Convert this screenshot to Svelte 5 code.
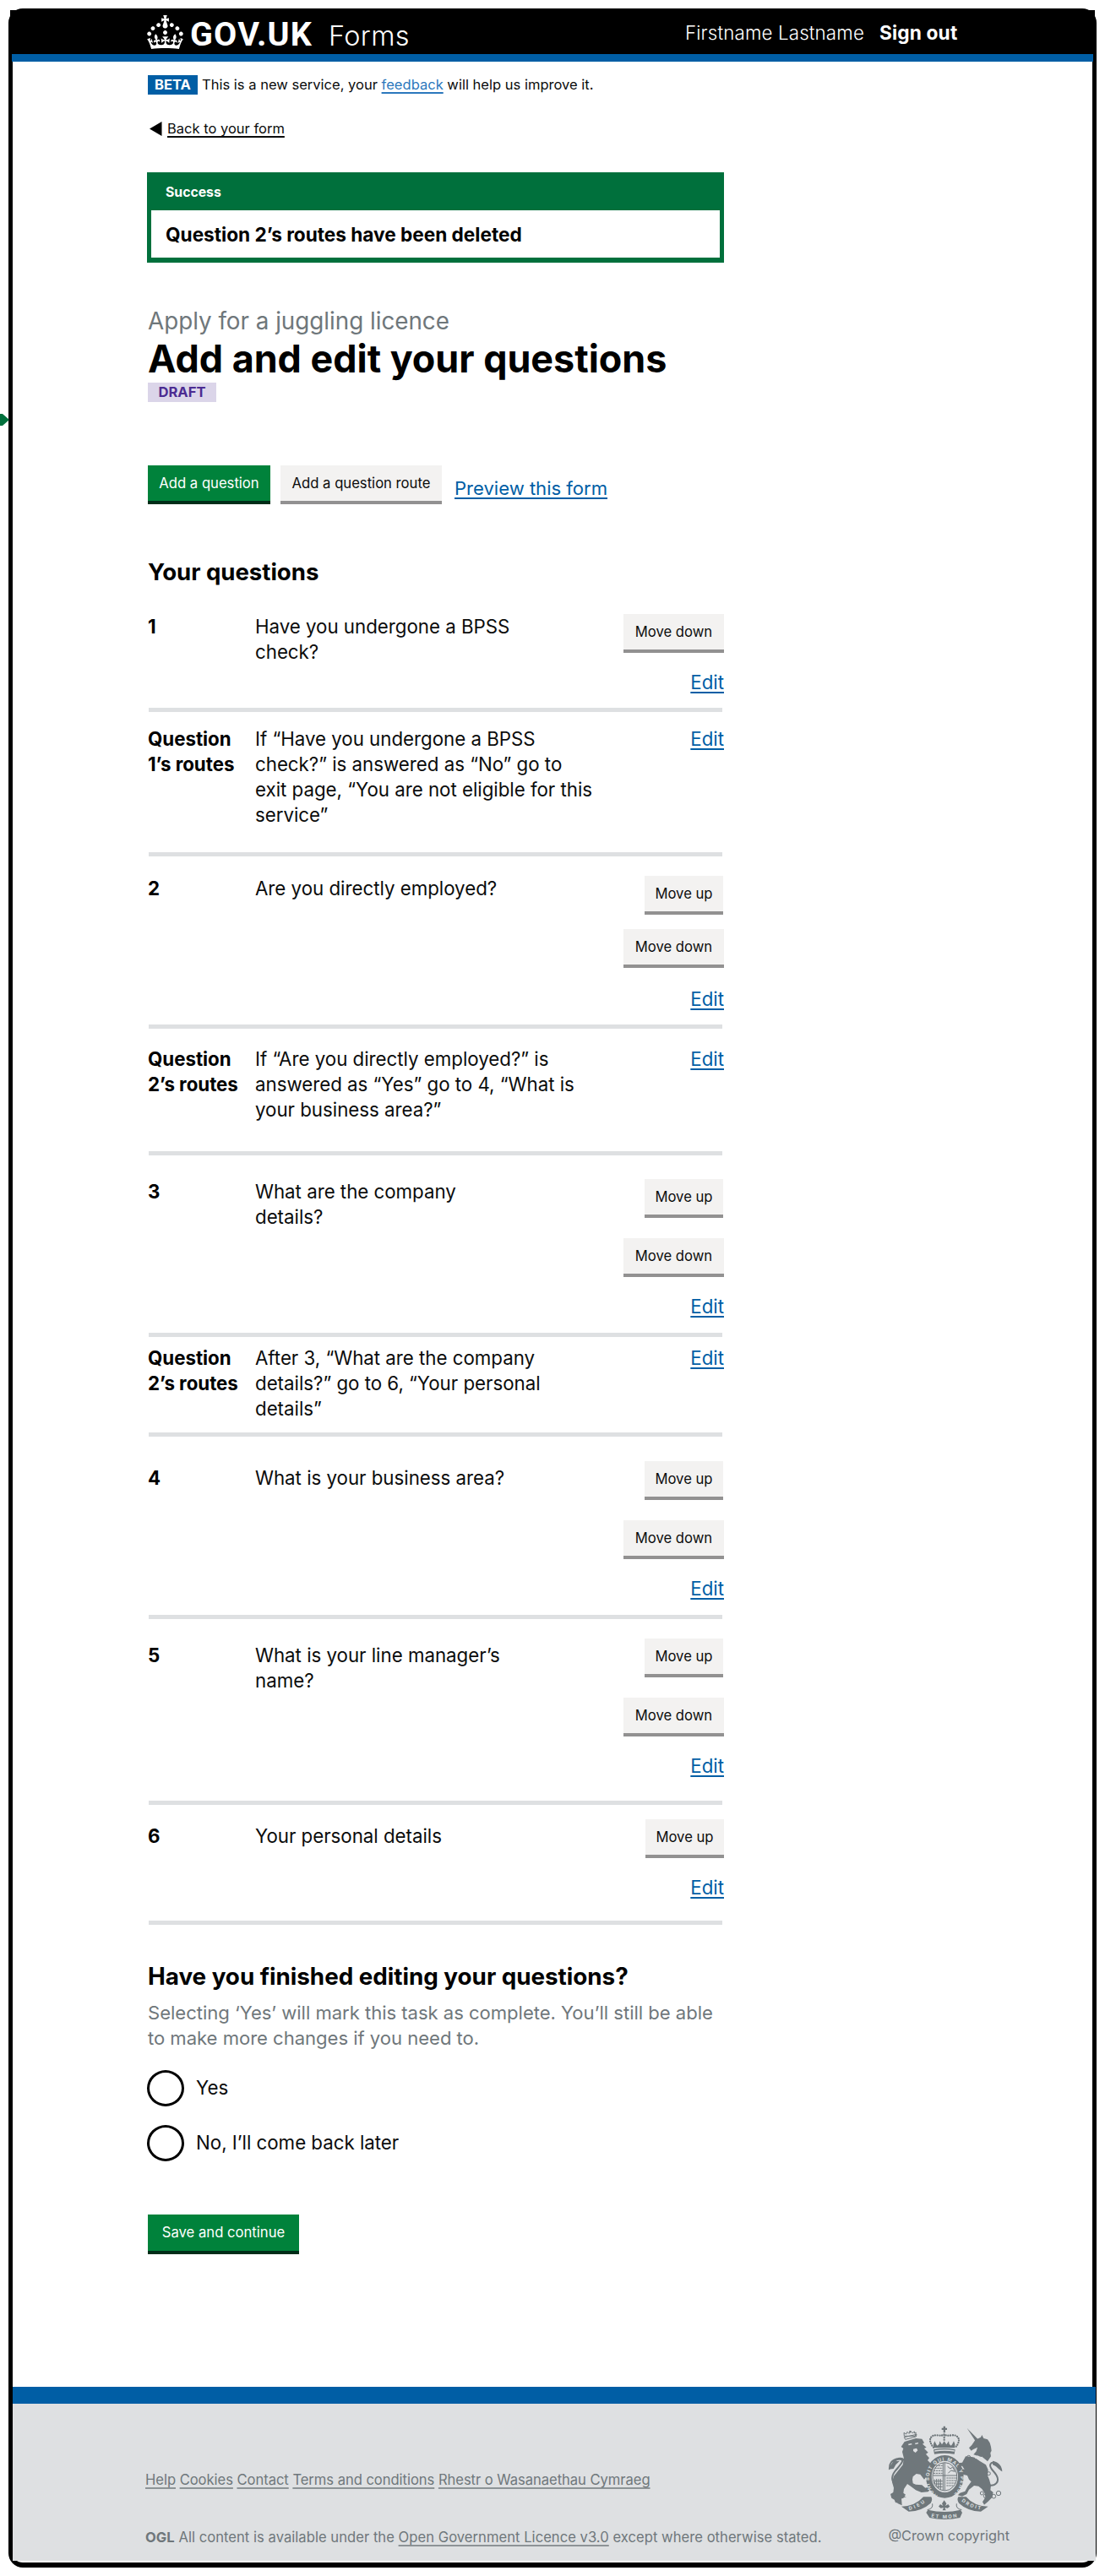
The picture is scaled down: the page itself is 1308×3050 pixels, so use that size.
<script>
  const rows = [
    { name: 'q1', key: '1', text: 'Have you undergone a BPSS\ncheck?', moves: ['Move down'] },
    { name: 'r1', key: 'Question\n1’s routes', text: 'If “Have you undergone a BPSS\ncheck?” is answered as “No” go to\nexit page, “You are not eligible for this\nservice”', moves: [] },
    { name: 'q2', key: '2', text: 'Are you directly employed?', moves: ['Move up', 'Move down'] },
    { name: 'r2', key: 'Question\n2’s routes', text: 'If “Are you directly employed?” is\nanswered as “Yes” go to 4, “What is\nyour business area?”', moves: [] },
    { name: 'q3', key: '3', text: 'What are the company\ndetails?', moves: ['Move up', 'Move down'] },
    { name: 'r3', key: 'Question\n2’s routes', text: 'After 3, “What are the company\ndetails?” go to 6, “Your personal\ndetails”', moves: [] },
    { name: 'q4', key: '4', text: 'What is your business area?', moves: ['Move up', 'Move down'] },
    { name: 'q5', key: '5', text: 'What is your line manager’s\nname?', moves: ['Move up', 'Move down'] },
    { name: 'q6', key: '6', text: 'Your personal details', moves: ['Move up'] }
  ];
  const footerLinks = ['Help', 'Cookies', 'Contact', 'Terms and conditions', 'Rhestr o Wasanaethau Cymraeg'];
  const options = ['Yes', 'No, I’ll come back later'];
</script>

<div class="frame">
  <svg class="flow-arrow" viewBox="0 0 11 14" aria-hidden="true"><path d="M0 0l3 0 8 7-8 7H0z" /></svg>

  <header class="header">
    <svg class="crown" viewBox="0 0 32 30" aria-hidden="true">
      <path fill-rule="evenodd" d="M22.6 10.4c-1 .4-2-.1-2.4-1-.4-.9.1-2 1-2.4.9-.4 2 .1 2.4 1s-.1 2-1 2.4m-5.9 6.7c-.9.4-2-.1-2.4-1-.4-.9.1-2 1-2.4.9-.4 2 .1 2.4 1s-.1 2-1 2.4m10.8-3.7c-1 .4-2-.1-2.4-1-.4-.9.1-2 1-2.4.9-.4 2 .1 2.4 1s0 2-1 2.4m3.3 4.8c-1 .4-2-.1-2.4-1-.4-.9.1-2 1-2.4.9-.4 2 .1 2.4 1s-.1 2-1 2.4M17 4.7l2.3 1.2V2.5l-2.3.7-.2-.2.9-3h-3.4l.9 3-.2.2c-.1.1-2.3-.7-2.3-.7v3.4L15 4.7c.1.1.1.2.2.2l-1.3 4c-.1.2-.1.4-.1.6 0 1.1.8 2 1.9 2.2h.7c1-.2 1.9-1.1 1.9-2.1 0-.2 0-.4-.1-.6l-1.3-4c-.1-.2 0-.2.1-.3m-7.6 5.7c.9.4 2-.1 2.4-1 .4-.9-.1-2-1-2.4-.9-.4-2 .1-2.4 1s0 2 1 2.4m-5 3c.9.4 2-.1 2.4-1 .4-.9-.1-2-1-2.4-.9-.4-2 .1-2.4 1s.1 2 1 2.4m-3.2 4.8c.9.4 2-.1 2.4-1 .4-.9-.1-2-1-2.4-.9-.4-2 .1-2.4 1s0 2 1 2.4m14.8 11c4.4 0 8.6.3 12.3.8 1.1-4.5 2.4-7 3.7-8.8l-2.5-.9c.2 1.3.3 1.9 0 2.7-.4-.4-.8-1.1-1.1-2.3l-1.2 4c.7-.5 1.3-.8 2-.9-1.1 2.5-2.6 3.1-3.5 3-1.1-.2-1.7-1.2-1.5-2.1.3-1.2 1.5-1.5 2.1-.1 1.1-2.3-.8-3-2-2.3 1.9-1.9 2.1-3.5.6-5.6-2.1 1.6-2.1 3.2-1.2 5.5-1.2-1.4-3.2-.6-2.5 1.6.9-1.4 2.1-.5 1.9.8-.2 1.1-1.7 2.1-3.5 1.9-2.7-.2-2.9-2.1-2.9-3.6.7-.1 1.9.5 2.9 1.9l.4-4.3c-1.1 1.1-2.1 1.4-3.2 1.4.4-1.2 2.1-3 2.1-3h-5.4s1.7 1.9 2.1 3c-1.1 0-2.1-.2-3.2-1.4l.4 4.3c1-1.4 2.2-2 2.9-1.9-.1 1.5-.2 3.4-2.9 3.6-1.9.2-3.4-.8-3.5-1.9-.2-1.3 1-2.2 1.9-.8.7-2.3-1.2-3-2.5-1.6.9-2.2.9-3.9-1.2-5.5-1.5 2-1.3 3.7.6 5.6-1.2-.7-3.1 0-2 2.3.6-1.4 1.8-1.1 2.1.1.2.9-.3 1.9-1.5 2.1-.9.2-2.4-.5-3.5-3 .6 0 1.2.3 2 .9l-1.2-4c-.3 1.1-.7 1.9-1.1 2.3-.3-.8-.2-1.4 0-2.7l-2.9.9C1.3 23 2.6 25.5 3.7 30c3.7-.5 7.9-.8 12.3-.8" />
    </svg>
    <span class="logotype">GOV.UK</span>
    <span class="product">Forms</span>
    <nav class="account">
      <span>Firstname Lastname</span>
      <b>Sign out</b>
    </nav>
  </header>
  <div class="header-bar"></div>

  <main class="main">
    <div class="phase">
      <strong class="phase-tag">BETA</strong>
      <span>This is a new service, your <a href="#feedback">feedback</a> will help us improve it.</span>
    </div>

    <div class="back">
      <svg viewBox="0 0 15 17" aria-hidden="true"><path d="M0 8.5L14.5 0v17z" /></svg>
      <a href="#back">Back to your form</a>
    </div>

    <section class="banner">
      <h2>Success</h2>
      <p>Question 2’s routes have been deleted</p>
    </section>

    <p class="caption">Apply for a juggling licence</p>
    <h1>Add and edit your questions</h1>
    <strong class="status">DRAFT</strong>

    <div class="actions">
      <button class="btn green">Add a question</button>
      <button class="btn grey">Add a question route</button>
      <a href="#preview">Preview this form</a>
    </div>

    <h2 class="heading">Your questions</h2>
    <div class="list">
      {#each rows as row}
        <div class="row {row.name}">
          <b class="key">{row.key}</b>
          <span class="value">{row.text}</span>
          <div class="moves">
            {#each row.moves as move}
              <button class="btn grey" class:up={move === 'Move up'}>{move}</button>
            {/each}
            <a href="#edit">Edit</a>
          </div>
        </div>
      {/each}
    </div>

    <h2 class="heading finish">Have you finished editing your questions?</h2>
    <p class="hint">Selecting ‘Yes’ will mark this task as complete. You’ll still be able<br />to make more changes if you need to.</p>
    <div class="radios">
      {#each options as option}
        <div class="radio"><i></i><span>{option}</span></div>
      {/each}
    </div>
    <button class="btn green save">Save and continue</button>
  </main>

  <footer class="footer">
    <div class="meta">
      <p>
        {#each footerLinks as link}
          <a href="#footer">{link}</a>{' '}
        {/each}
      </p>
      <p><b>OGL</b> All content is available under the <a href="#ogl">Open Government Licence v3.0</a> except where otherwise stated.</p>
    </div>
    <div class="copyright">
      <svg class="crest" viewBox="150 213 411 336" aria-hidden="true">
        <defs>
          <path id="garter" d="M327 461A56 65 0 1 1 377 461" />
          <path id="dieu" d="M226 513Q260 506 290 479" />
          <path id="mon" d="M304 538Q350 548 400 537" />
          <path id="droit" d="M411 481Q440 506 484 512" />
        </defs>
        <!-- lion -->
        <g class="ink">
          <path d="M212 262l38-10 2-8-44 10zM208 250l-1-12 8 5 4-8 6 6 6-8 6 6 8-5 0 6 5-2-3 12z" class="line thin" />
          <path d="M226 231h6v7h-6z" />
          <path d="M209 270l40-12 22 2 8 14-6 4 14 12-8 4 14 14-8 6 12 14-6 8 12 12-6 10 10 6-8 12-2 8 8 12-10-4-8 2-8 10-14-18-14-2-12 10-2 10 2 14 10 4 22 2 12 10 12-4 4 10-6 8-24 2-20-8-18-14-12-8-12 18-2 14 8 6-8 12-12 4-4 14-12-2-4-10-10-6-4-14 10-6 2-16-6-20 6-22 18-22 14-18 4-22-6-24 4-12-8-6z" />
          <path d="M186 412c-24 14-26-18-10-38 16-20 38-40 16-42-20-1-22 18-36 32-2-14 8-30 30-34 24-5 30 14 16 32-18 22-28 30-24 44" class="line" />
          <path d="M152 368l18-28 22-2-14 14-8 14z" />
          <path d="M216 466l-18 4 2 26-14-6-8-10-4-22z" />
        </g>
        <g class="paper">
          <path d="M222 278l12-2 2 4-12 3zM246 275l12-2 0 4-10 3zM240 296l12-3 4 8-8 8-8-6z" />
        </g>
        <!-- unicorn -->
        <g class="ink">
          <path d="M431 222l38 38-8 8z" />
          <path d="M438 292l10-10 12-18 12-6 8-4 4-8 6 12 14 4 8 12 4 14 2 14-4 8 2 12-12 18-16-14-18-6-16-4 10-12 4-14-16 8-6 4z" />
          <path d="M426 322l22 2 10 2 20 14 20 12 8 18-2 20 6 14 6 22-2 16 10 8-4 18-14 14-14 12-6-10 10-16-2-14-10-16-12-10-16-2-18 14-8 16-16 8-16-4 8-8 18-6 10-18 12-16-8-8-6-14-16-4-10 12-8-18 10-14 14 2-8-12-18 2 4-12 14-2z" />
          <path d="M506 424c26 6 42-12 30-34-8-16-28-26-22-40 8-14 20 0 36 12" class="line" />
          <path d="M522 338c16 2 34 16 34 38-12-6-20-20-34-24z" />
        </g>
        <g class="paper thin-paper"><path d="M456 318l6 10 8-6 6 12 8-8 4 14 10-4" /></g>
        <g class="ink">
          <circle class="line thin" cx="437" cy="325" r="6" /><circle class="line thin" cx="434" cy="378" r="6" />
          <circle class="line thin" cx="508" cy="383" r="6" /><circle class="line thin" cx="484" cy="453" r="6" />
          <circle class="line thin" cx="497" cy="463" r="7" /><circle class="line thin" cx="526" cy="464" r="7" />
          <circle class="line thin" cx="543" cy="453" r="8" />
        </g>
        <!-- crown -->
        <g class="ink">
          <path d="M347 215h7v6h6v7h-6v10h-7v-10h-6v-7h6z" />
          <path class="beads" d="M312 290C288 262 304 244 326 247Q344 250 350 244Q358 250 376 247C398 244 414 262 390 290" />
          <path class="beads" d="M350 247v22" />
          <path d="M312 278l4-10 6 12 4 4 6-6 2-10 8 12 8-12 8 12 8-12 2 10 6 6 4-4 6-12 4 10 0 14H312z" />
          <path d="M312 298q38-8 77 0l-3 16q-36-6-71 0z" />
        </g>
        <path class="paper thin-paper" d="M316 303q36-6 70 0" />
        <!-- garter and shield -->
        <ellipse class="ink line ring" cx="352" cy="394" rx="57" ry="66" />
        <ellipse class="ink line thin" cx="352" cy="394" rx="43" ry="50" />
        <g class="ink line thin">
          <path d="M310 390h84M352 345v98M346 345v98" />
          <path d="M316 364h28M312 373h32M312 382h32M320 355h24M358 399h34M358 408h33M358 417h31M358 426h24" stroke-dasharray="7 2" />
          <path d="M362 358l10 8 8-6 8 16-14-4-10 10M316 404v16M323 402v26M330 402v34M337 402v38M316 410h28M318 420h26M324 430h20" />
        </g>
        <text class="motto"><textPath href="#garter" textLength="318">HONI SOIT QUI MAL Y PENSE</textPath></text>
        <!-- ribbon -->
        <g class="ink">
          <path d="M198 500Q246 500 276 466l28 0q6 10-2 22-30 28-78 30z" />
          <path d="M506 500Q456 500 428 466l-28 0q-6 10 2 22 30 28 78 30z" />
          <path d="M292 512l-6 10 12 18q52 12 108 0l8-18-6-10q-56 14-116 0z" />
          <path class="line thin" d="M290 512q22-4 18-22M412 512q-22-4-18-22" />
          <path d="M350 478l8 12-4 8 10-6 6 8-8 6-10-2 4 10h-12l4-10-10 2-8-6 6-8 10 6-4-8z" />
        </g>
        <text class="motto"><textPath href="#dieu" textLength="62">DIEU</textPath></text>
        <text class="motto"><textPath href="#mon" textLength="92">ET MON</textPath></text>
        <text class="motto"><textPath href="#droit" textLength="76">DROIT</textPath></text>
      </svg>
      <span>@Crown copyright</span>
    </div>
  </footer>
</div>

<style>
  :global(body) {
    margin: 0;
    background: #fff;
  }
  .frame {
    position: relative;
    box-sizing: border-box;
    width: 1288px;
    height: 3030px;
    margin: 10px;
    border: 5px solid #000;
    border-bottom-width: 6px;
    border-radius: 17px;
    font-family: Inter, 'Open Sans', sans-serif;
    font-size: 22.3px;
    line-height: 30px;
    letter-spacing: -0.02px;
    color: #0b0c0c;
  }
  h1, h2, p { margin: 0; }
  a { color: #005ea5; text-decoration-thickness: 1.5px; text-underline-offset: 3px; text-decoration-skip-ink: none; }
  b, strong, h1, h2 { font-weight: 700; color: #000; }

  .flow-arrow {
    position: absolute;
    left: -15px;
    top: 475px;
    width: 11px;
    height: 14px;
    fill: #00703c;
  }

  .header {
    display: flex;
    align-items: flex-start;
    height: 52px;
    margin: -3px -3px 0;
    padding-left: 162px;
    box-sizing: border-box;
    background: #000;
    color: #fff;
  }
  .crown { width: 43px; height: 40px; margin-top: 6px; fill: #fff; }
  .logotype {
    margin: 9px 0 0 8px;
    width: 164px;
    font: 700 39.5px/40px Roboto, sans-serif;
    letter-spacing: 1.2px;
  }
  .product { width: 422px; margin-top: 11px; font-size: 32.4px; font-weight: 300; line-height: 40px; letter-spacing: 0.4px; }
  .account { display: flex; gap: 18px; margin-top: 12px; font-weight: 300; letter-spacing: 0.15px; }
  .account b { color: #fff; font-size: 22.7px; }
  .header-bar { height: 9px; margin: 0 -1px; background: #005ea5; }

  .main {
    display: flex;
    flex-direction: column;
    align-items: flex-start;
    box-sizing: border-box;
    height: 2753px;
    padding: 16px 0 0 160px;
  }
  .phase { display: flex; gap: 5px; font-size: 16.55px; line-height: 23px; letter-spacing: 0; }
  .phase-tag { width: 59px; background: #005ea5; color: #fff; text-align: center; }
  .phase a { color: #2b78bd; }
  .back { display: flex; align-items: center; gap: 6px; margin: 30px 0 0 2px; font-size: 16.5px; line-height: 20px; letter-spacing: 0; }
  .back svg { width: 15px; height: 17px; }
  .back a { color: #0b0c0c; }

  .banner {
    box-sizing: border-box;
    width: 683px;
    margin: 42px 0 0 -1px;
    border: 5px solid #00703c;
    border-top: 0;
    border-bottom-width: 6px;
  }
  .banner h2 { padding: 1px 17px 0; height: 44px; background: #00703c; color: #fff; font-size: 15.8px; line-height: 45px; }
  .banner p { padding: 1px 17px 0; font-weight: 700; font-size: 22.65px; line-height: 55px; color: #000; }

  .caption { margin-top: 52px; font-size: 27.8px; line-height: 34px; color: #6f777b; }
  h1 { margin-top: 3px; font-size: 44.9px; line-height: 50px; }
  .status {
    width: 81px;
    margin-top: 3px;
    background: #dbd5e9;
    color: #4c2c92;
    font-size: 16.6px;
    line-height: 23px;
    letter-spacing: 0;
    text-align: center;
  }

  .btn {
    height: 46px;
    padding: 0;
    border: 0;
    border-bottom: 4px solid #929191;
    background: #f3f2f1;
    font: 400 16.65px/42px Inter, 'Open Sans', sans-serif;
    letter-spacing: 0;
    color: #0b0c0c;
    text-align: center;
  }
  .btn.green { border-bottom-color: #002d18; background: #00823b; color: #fff; }

  .actions { display: flex; align-items: flex-start; margin-top: 75px; font-size: 22.1px; }
  .actions .green { width: 145px; }
  .actions .grey { width: 191px; margin: 0 15px 0 12px; }
  .actions a { margin-top: 12px; }

  .heading { margin-top: 63px; font-size: 27.6px; line-height: 34px; }
  .list {
    display: grid;
    grid-template-rows: 129px 171px 204px 150px 215px 118px 216px 220px 142px;
    width: 679px;
    margin: 20px 0 0 1px;
  }
  .row {
    display: grid;
    grid-template-columns: 126px 1fr auto;
    align-items: start;
    box-sizing: border-box;
    border-bottom: 5px solid #dee0e2;
  }
  .key, .value { white-space: pre; }
  .key { margin-left: -1px; font-size: 22.3px; }
  .moves { display: flex; flex-direction: column; align-items: flex-end; margin-right: -2px; }
  .moves .grey { width: 119px; }
  .moves .up { width: 93px; margin-right: 1px; }
  .moves .btn + .btn { margin-top: 24px; }
  .moves .btn + a { margin-top: 20px; }
  .q1 { padding-top: 13px; }
  .r1 { padding-top: 17px; }
  .q2 { padding-top: 23px; }
  .q2 .btn + .btn { margin-top: 17px; }
  .q2 .btn + a { margin-top: 22px; }
  .r2 { padding-top: 21px; }
  .q3 { padding-top: 28px; }
  .r3 { padding-top: 10px; }
  .q4 { padding-top: 29px; }
  .q5 { padding-top: 23px; }
  .q6 { padding-top: 17px; }
  .q6 .up { margin-right: 0; }
  .q4 > :not(.moves), .q5 > :not(.moves), .q6 > :not(.moves) { margin-top: 5px; }

  .finish { margin-top: 44px; font-size: 27.8px; }
  .hint { margin-top: 11px; font-size: 22.1px; letter-spacing: -0.04px; color: #6f777b; }
  .radios { display: flex; flex-direction: column; gap: 22px; margin: 23px 0 0 -1px; }
  .radio { display: flex; gap: 14px; line-height: 42px; }
  .radio i { box-sizing: border-box; width: 44px; height: 43px; border: 3px solid #000; border-radius: 50%; }
  .save { width: 179px; height: 47px; line-height: 43px; margin-top: 63px; }

  .footer {
    display: flex;
    justify-content: space-between;
    box-sizing: border-box;
    height: 206px;
    margin-right: -4px;
    padding: 26px 102px 0 156px;
    border-top: 20px solid #005ea5;
    background: #dee0e2;
    color: #6f777b;
    font-size: 16.6px;
    line-height: 24px;
    letter-spacing: 0;
  }
  .footer a, .footer b { color: #6f777b; }
  .footer a { text-decoration-color: #8d9396; }
  .meta { display: flex; flex-direction: column; gap: 44px; padding-top: 52px; }
  .meta p:first-child { letter-spacing: -0.05px; padding-left: 1px; }
  .meta p:last-child { letter-spacing: 0.03px; padding-left: 1px; }
  .copyright { display: flex; flex-direction: column; font-size: 16.3px; }
  .crest { width: 137px; height: 112px; margin-bottom: 6px; }
  .ink { fill: #6f777b; }
  .paper { fill: #dee0e2; }
  .thin-paper { fill: none; stroke: #dee0e2; stroke-width: 4; }
  .line { fill: none; stroke: #6f777b; stroke-width: 6; }
  .thin { stroke-width: 3; }
  .ring { stroke-width: 20; }
  .beads { fill: none; stroke: #6f777b; stroke-width: 7; stroke-linecap: round; stroke-dasharray: 0 8; }
  .motto { fill: #dee0e2; font: 700 17px Inter, sans-serif; letter-spacing: 0; }
</style>
